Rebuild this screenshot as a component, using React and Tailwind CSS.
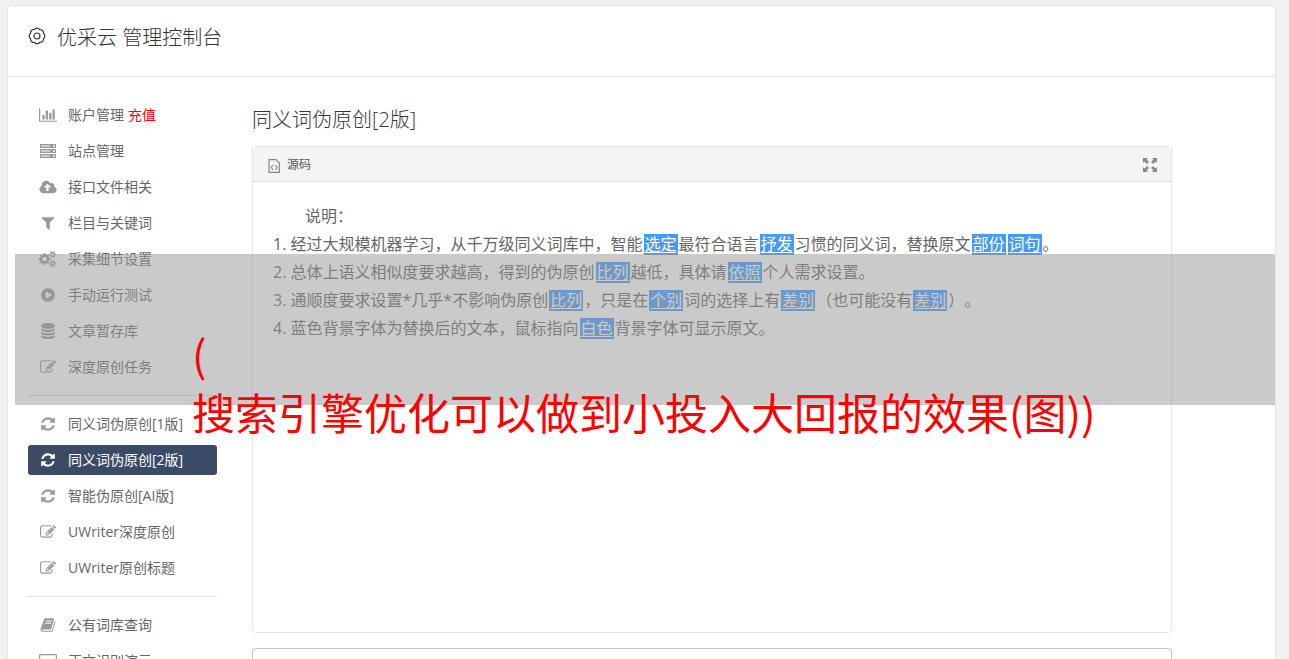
import React from 'react';

const paths = {
    chart: 'M640 896v512h-256v-512h256zM1024 384v1024h-256v-1024h256zM2048 1536v128h-2048v-1536h128v1408h1920zM1408 640v768h-256v-768h256zM1792 256v1152h-256v-1152h256z',
    cloud: 'M1280 928q0-14-9-23l-352-352q-9-9-23-9t-23 9l-351 351q-10 12-10 24 0 14 9 23t23 9h224v352q0 13 9.5 22.5t22.5 9.5h192q13 0 22.5-9.5t9.5-22.5v-352h224q13 0 22.5-9.5t9.5-22.5zm640 288q0 159-112.5 271.5t-271.5 112.5h-1088q-185 0-316.5-131.5t-131.5-316.5q0-130 70-240t188-165q-2-30-2-43 0-212 150-362t362-150q156 0 285.5 87t188.5 231q71-62 166-62 106 0 181 75t75 181q0 76-41 138 130 31 213.5 135.5t83.5 238.5z',
    filter: 'M1595 295q17 41-14 70l-493 493v742q0 42-39 59-13 5-25 5-27 0-45-19l-256-256q-19-19-19-45v-486l-493-493q-31-29-14-70 17-39 59-39h1280q42 0 59 39z',
    cogs: 'M832 896q0-106-75-181t-181-75-181 75-75 181 75 181 181 75 181-75 75-181zm768 512q0-52-38-90t-90-38-90 38-38 90q0 53 37.5 90.5t90.5 37.5 90.5-37.5 37.5-90.5zm0-1024q0-52-38-90t-90-38-90 38-38 90q0 53 37.5 90.5t90.5 37.5 90.5-37.5 37.5-90.5zm-384 421v185q0 10-7 19.5t-16 10.5l-155 24q-11 35-32 76 34 48 90 115 7 11 7 20 0 12-7 19-23 30-82.5 89.5t-78.5 59.5q-11 0-21-7l-115-90q-37 19-77 31-11 108-23 155-7 24-30 24h-186q-11 0-20-7.5t-10-17.5l-23-153q-34-10-75-31l-118 89q-7 7-20 7-11 0-21-8-144-133-144-160 0-9 7-19 10-14 41-53t47-61q-23-44-35-82l-152-24q-10-1-17-9.5t-7-19.5v-185q0-10 7-19.5t16-10.5l155-24q11-35 32-76-34-48-90-115-7-11-7-20 0-12 7-20 22-30 82-89t79-59q11 0 21 7l115 90q34-18 77-32 11-108 23-154 7-24 30-24h186q11 0 20 7.5t10 17.5l23 153q34 10 75 31l118-89q8-7 20-7 11 0 21 8 144 133 144 160 0 8-7 19-12 16-42 54t-45 60q23 48 34 82l152 23q10 2 17 10.5t7 19.5zm640 533v140q0 16-149 31-12 27-30 52 51 113 51 138 0 4-4 7-122 71-124 71-8 0-46-47t-52-68q-20 2-30 2t-30-2q-14 21-52 68t-46 47q-2 0-124-71-4-3-4-7 0-25 51-138-18-25-30-52-149-15-149-31v-140q0-16 149-31 13-29 30-52-51-113-51-138 0-4 4-7 4-2 35-20t59-34 30-16q8 0 46 46.5t52 67.5q20-2 30-2t30 2q51-71 92-112l6-2q4 0 124 70 4 3 4 7 0 25-51 138 17 23 30 52 149 15 149 31zm0-1024v140q0 16-149 31-12 27-30 52 51 113 51 138 0 4-4 7-122 71-124 71-8 0-46-47t-52-68q-20 2-30 2t-30-2q-14 21-52 68t-46 47q-2 0-124-71-4-3-4-7 0-25 51-138-18-25-30-52-149-15-149-31v-140q0-16 149-31 13-29 30-52-51-113-51-138 0-4 4-7 4-2 35-20t59-34 30-16q8 0 46 46.5t52 67.5q20-2 30-2t30 2q51-71 92-112l6-2q4 0 124 70 4 3 4 7 0 25-51 138 17 23 30 52 149 15 149 31z',
    play: 'M896 128q209 0 385.5 103t279.5 279.5 103 385.5-103 385.5-279.5 279.5-385.5 103-385.5-103-279.5-279.5-103-385.5 103-385.5 279.5-279.5 385.5-103zm384 823q32-18 32-55t-32-55l-544-320q-31-19-64-1-32 19-32 56v640q0 37 32 56 16 8 32 8 17 0 32-9z',
    database: 'M896 768q237 0 443-43t325-127v170q0 69-103 128t-280 93.5-385 34.5-385-34.5-280-93.5-103-128v-170q119 84 325 127t443 43zm0 768q237 0 443-43t325-127v170q0 69-103 128t-280 93.5-385 34.5-385-34.5-280-93.5-103-128v-170q119 84 325 127t443 43zm0-384q237 0 443-43t325-127v170q0 69-103 128t-280 93.5-385 34.5-385-34.5-280-93.5-103-128v-170q119 84 325 127t443 43zm0-1152q208 0 385 34.5t280 93.5 103 128v128q0 69-103 128t-280 93.5-385 34.5-385-34.5-280-93.5-103-128v-128q0-69 103-128t280-93.5 385-34.5z',
    edit: 'M888 1184l116-116-152-152-116 116v56h96v96h56zm440-720q-16-16-33 1l-350 350q-17 17-1 33t33-1l350-350q17-17 1-33zm80 594v190q0 119-84.5 203.5t-203.5 84.5h-832q-119 0-203.5-84.5t-84.5-203.5v-832q0-119 84.5-203.5t203.5-84.5h832q63 0 117 25 15 7 18 23 3 17-9 29l-49 49q-14 14-32 8-23-6-45-6h-832q-66 0-113 47t-47 113v832q0 66 47 113t113 47h832q66 0 113-47t47-113v-126q0-13 9-22l64-64q15-15 35-7t20 29zm-96-738l288 288-672 672h-288v-288zm444 132l-92 92-288-288 92-92q28-28 68-28t68 28l152 152q28 28 28 68t-28 68z',
    refresh: 'M1639 1056q0 5-1 7-64 268-268 434.5t-478 166.5q-146 0-282.5-55t-243.5-157l-129 129q-19 19-45 19t-45-19-19-45v-448q0-26 19-45t45-19h448q26 0 45 19t19 45-19 45l-137 137q71 66 161 102t187 36q134 0 250-65t186-179q11-17 53-117 8-23 30-23h192q13 0 22.5 9.5t9.5 22.5zm25-800v448q0 26-19 45t-45 19h-448q-26 0-45-19t-19-45 19-45l138-138q-148-137-349-137-134 0-250 65t-186 179q-11 17-53 117-8 23-30 23h-199q-13 0-22.5-9.5t-9.5-22.5v-7q65-268 270-434.5t480-166.5q146 0 284 55.5t245 156.5l130-129q19-19 45-19t45 19 19 45z',
    book: 'M1703 478q40 57 18 129l-275 906q-19 64-76.5 107.5t-122.5 43.5h-923q-77 0-148.5-53.5t-99.5-131.5q-24-67-2-127 0-4 3-27t4-37q1-8-3-21.5t-3-19.5q2-11 8-21t16.5-23.5 16.5-23.5q23-38 45-91.5t30-91.5q3-10 .5-30t-.5-28q3-11 17-28t17-23q21-36 42-92t25-90q1-9-2.5-32t.5-28q4-13 22-30.5t22-22.5q19-26 42.5-84.5t27.5-96.5q1-8-3-25.5t-2-26.5q2-8 9-18t18-23 17-21q8-12 16.5-30.5t15-35 16-36 19.5-32 26.5-23.5 36-11.5 47.5 5.5l-1 3q38-9 51-9h761q74 0 114 56t18 130l-274 906q-36 119-71.5 153.5t-128.5 34.5h-869q-27 0-38 15-11 16-1 43 24 70 144 70h923q29 0 56-15.5t35-41.5l300-987q7-22 5-57 38 15 59 43zm-1064 2q-4 13 2 22.5t20 9.5h608q13 0 25.5-9.5t16.5-22.5l21-64q4-13-2-22.5t-20-9.5h-608q-13 0-25.5 9.5t-16.5 22.5zm-83 256q-4 13 2 22.5t20 9.5h608q13 0 25.5-9.5t16.5-22.5l21-64q4-13-2-22.5t-20-9.5h-608q-13 0-25.5 9.5t-16.5 22.5z',
};

const wide = { chart: 2048, cloud: 1920, cogs: 1920 };

function Icon({ name }) {
    if (name === 'server') {
        return (
            <svg className="h-4 w-4" viewBox="0 0 16 16" fill="currentColor">
                {[1, 6, 11].map((y) => (
                    <g key={y}>
                        <rect x="0" y={y} width="16" height="4" />
                        <rect x="1" y={y + 1} width="9" height="2" fill="#fff" opacity=".5" />
                        <rect x="13" y={y + 1} width="2" height="2" fill="#fff" opacity=".7" />
                    </g>
                ))}
            </svg>
        );
    }
    if (name === 'laptop') {
        return (
            <svg className="h-4 w-[18px]" viewBox="0 0 18 16" fill="none" stroke="currentColor">
                <rect x="0.6" y="1.6" width="16.8" height="11" rx="1" strokeWidth="1.2" />
            </svg>
        );
    }
    if (wide[name]) {
        return (
            <svg className="h-4 w-[18px]" viewBox={`0 0 ${wide[name]} 1792`} fill="currentColor">
                <path d={paths[name]} />
            </svg>
        );
    }
    return (
        <svg className="h-4 w-4" viewBox="0 0 1792 1792" fill="currentColor">
            <path d={paths[name]} />
        </svg>
    );
}

const menu = [
    [
        { icon: 'chart', label: '账户管理', extra: '充值' },
        { icon: 'server', label: '站点管理' },
        { icon: 'cloud', label: '接口文件相关' },
        { icon: 'filter', label: '栏目与关键词' },
        { icon: 'cogs', label: '采集细节设置' },
        { icon: 'play', label: '手动运行测试' },
        { icon: 'database', label: '文章暂存库' },
        { icon: 'edit', label: '深度原创任务' },
    ],
    [
        { icon: 'refresh', label: '同义词伪原创[1版]' },
        { icon: 'refresh', label: '同义词伪原创[2版]', active: true },
        { icon: 'refresh', label: '智能伪原创[AI版]' },
        { icon: 'edit', label: 'UWriter深度原创' },
        { icon: 'edit', label: 'UWriter原创标题' },
    ],
    [
        { icon: 'book', label: '公有词库查询' },
        { icon: 'laptop', label: '正文识别演示' },
    ],
];

function MenuItem({ item }) {
    return (
        <li>
            <a
                href="#"
                className={`flex h-[30px] items-center rounded-[3px] pl-[10px] text-sm ${item.active ? 'bg-[#3b4b66] text-white' : 'text-[#666]'}`}
            >
                <span className={`mr-[10px] flex w-5 justify-center ${item.active ? 'text-white' : 'text-[#999]'}`}>
                    <Icon name={item.icon} />
                </span>
                <span>
                    {item.label}
                    {item.extra && <span className="ml-1 text-[#f00]">{item.extra}</span>}
                </span>
            </a>
        </li>
    );
}

// replaced synonym
function Mark({ children }) {
    return <span className="mx-px inline-block h-[21px] bg-[#479af5] px-px leading-[21px] text-white underline underline-offset-2">{children}</span>;
}

export default function App() {
    return (
        <div className="relative h-screen overflow-hidden bg-[#f1f1f1] pt-[5px] pr-[13px] pl-[7px] font-['Open_Sans','Noto_Sans_CJK_SC',sans-serif] [text-spacing-trim:space-all]">
            <div className="rounded-t border border-[#e5e5e5] bg-white">
                <header className="flex h-[71px] items-center border-b border-[#e5e5e5] px-5 pb-[6px] text-[#333]">
                    <svg className="mr-[11px] mb-1 h-[18px] w-[18px]" viewBox="0 0 18 18" fill="none" stroke="currentColor" strokeWidth="1.2">
                        <circle cx="9" cy="9" r="3" />
                        <path
                            d="M6.320 2.530A3.300 3.300 0 0 1 11.680 2.530A3.300 3.300 0 0 1 15.470 6.320A3.300 3.300 0 0 1 15.470 11.680A3.300 3.300 0 0 1 11.680 15.470A3.300 3.300 0 0 1 6.320 15.470A3.300 3.300 0 0 1 2.530 11.680A3.300 3.300 0 0 1 2.530 6.320A3.300 3.300 0 0 1 6.320 2.530Z"
                            strokeLinejoin="round"
                        />
                    </svg>
                    <h1 className="text-xl font-light">优采云 管理控制台</h1>
                </header>

                <div className="flex pl-5">
                    <nav className="w-[189px] shrink-0 pt-[23px]">
                        {menu.map((group, i) => (
                            <ul key={i} className={`flex flex-col gap-[6px] ${i > 0 ? 'mt-[13px] border-t border-[#ddd] pt-[13px]' : ''}`}>
                                {group.map((item) => <MenuItem key={item.label} item={item} />)}
                            </ul>
                        ))}
                    </nav>

                    <main className="mr-[103px] ml-[35px] min-w-0 flex-1 pt-7">
                        <h2 className="mb-[11px] text-xl leading-[30px] font-light text-[#333]">同义词伪原创[2版]</h2>
                        <section className="h-[487px] rounded border border-[#e5e5e5]">
                            <div className="flex h-[35px] items-center justify-between border-b border-[#e5e5e5] bg-[#f4f4f4] px-[14px] pt-[2px] text-xs text-[#555]">
                                <button className="flex items-center gap-[6px]">
                                    <svg className="mt-[2px] h-[14px] w-[14px]" viewBox="0 0 14 14" fill="none" stroke="#888" strokeWidth="1.2">
                                        <path d="M2 .6h7l3.400 3.400v9.400H2z M6.200 6L4.200 8.500l2 2.500M8.300 6l2 2.500-2 2.500" />
                                    </svg>
                                    源码
                                </button>
                                <button aria-label="全屏">
                                    <svg className="h-[14px] w-[14px]" viewBox="0 0 14 14" fill="#888">
                                        <path d="M0 0h5L3.500 1.500 6 4 4 6 1.500 3.500 0 5zM14 0v5l-1.500-1.500L10 6 8 4l2.500-2.500L9 0zM0 14V9l1.500 1.500L4 8l2 2-2.500 2.500L5 14zM14 14H9l1.500-1.500L8 10l2-2 2.500 2.500L14 9z" />
                                    </svg>
                                </button>
                            </div>
                            <div className="px-5 pt-5 text-base leading-7 text-[#666]">
                                <p className="indent-8">说明：</p>
                                <ol>
                                    <li>1. 经过大规模机器学习，从千万级同义词库中，智能<Mark>选定</Mark>最符合语言<Mark>抒发</Mark>习惯的同义词，替换原文<Mark>部份</Mark><Mark>词句</Mark>。</li>
                                    <li>2. 总体上语义相似度要求越高，得到的伪原创<Mark>比列</Mark>越低，具体请<Mark>依照</Mark>个人需求设置。</li>
                                    <li>3. 通顺度要求设置*几乎*不影响伪原创<Mark>比列</Mark>，只是在<Mark>个别</Mark>词的选择上有<Mark>差别</Mark>（也可能没有<Mark>差别</Mark>）。</li>
                                    <li>4. 蓝色背景字体为替换后的文本，鼠标指向<Mark>白色</Mark>背景字体可显示原文。</li>
                                </ol>
                            </div>
                        </section>
                        <section className="mt-[15px] h-20 rounded border border-[#c4c4c4]" />
                    </main>
                </div>
            </div>

            {/* caption band over the page */}
            <div className="pointer-events-none absolute top-[254px] right-[14px] left-[15px] h-[151px] bg-[#969696]/50">
                <p className="pt-[70px] pl-[177px] font-['Noto_Sans_CJK_SC',sans-serif] text-[43px] leading-[58px] whitespace-nowrap text-[#f00]">
                    (<br />搜索引擎优化可以做到小投入大回报的效果(图))
                </p>
            </div>
        </div>
    );
}
